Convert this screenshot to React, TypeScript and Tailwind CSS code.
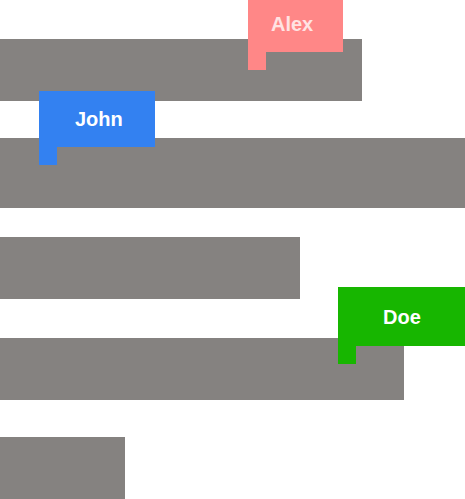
import React from 'react';

const BARS = [
  { w: 'w-[362px]', h: 'h-[62px]', mt: 'mt-[39px]' },
  { w: 'w-[465px]', h: 'h-[70px]', mt: 'mt-[37px]' },
  { w: 'w-[300px]', h: 'h-[62px]', mt: 'mt-[29px]' },
  { w: 'w-[404px]', h: 'h-[62px]', mt: 'mt-[39px]' },
  { w: 'w-[125px]', h: 'h-[62px]', mt: 'mt-[37px]' },
];

const Flag: React.FC<{ name: string; className: string; box: string; bg: string; text: string }> = ({ name, className, box, bg, text }) => (
  <div className={`absolute flex flex-col ${className}`}>
    <div className={`flex items-center font-bold text-[20px] ${box} ${bg} ${text}`}>{name}</div>
    <div className={`w-[18px] h-[18px] ${bg}`} />
  </div>
);

const App: React.FC = () => {
  return (
    <div className="relative w-[465px] h-[499px] overflow-hidden bg-white" style={{ fontFamily: '"Liberation Sans", Arial, sans-serif' }}>
      <div className="flex flex-col">
        {BARS.map((b, i) => (
          <div key={i} className={`${b.w} ${b.h} ${b.mt} bg-[#858280]`} />
        ))}
      </div>

      <Flag name="Alex" className="left-[248px] top-[-4px]" box="w-[95px] h-[56px] pl-[23px]" bg="bg-[#ff8787]" text="text-[#ffe3e3]" />
      <Flag name="John" className="left-[39px] top-[91px]" box="w-[116px] h-[56px] pl-[36px]" bg="bg-[#3381f1]" text="text-white" />
      <Flag name="Doe" className="left-[338px] top-[287px]" box="w-[127px] h-[59px] pl-[45px]" bg="bg-[#17b600]" text="text-white" />
    </div>
  );
};

export default App;
